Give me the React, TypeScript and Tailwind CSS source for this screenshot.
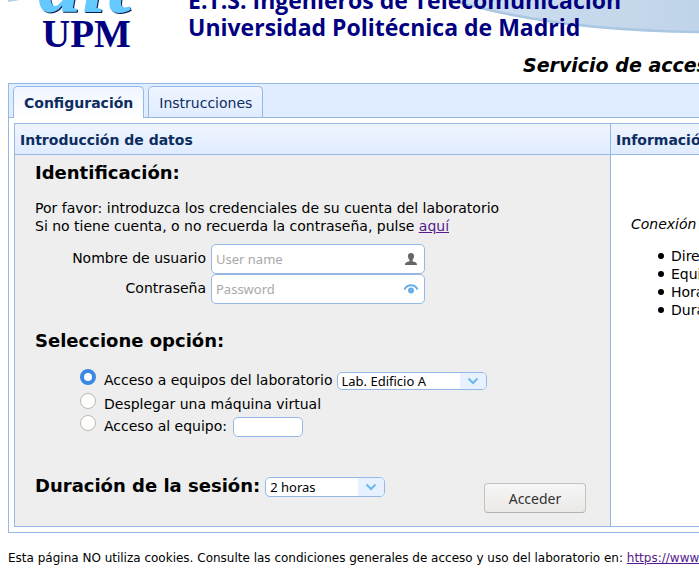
import { useState, type ReactNode } from "react";

const SANS = "font-['DejaVu_Sans','Verdana',sans-serif]";

function Chevron() {
  return (
    <svg viewBox="0 0 12 8" className="h-2 w-3" fill="none" stroke="#6cb8f0" strokeWidth="2" aria-hidden="true">
      <path d="M1.5 1.5 L6 6 L10.500 1.500" />
    </svg>
  );
}

function Picker({ id, label, className, options }: { id: string; label: string; className: string; options: string[] }) {
  return (
    <span className={`relative inline-flex overflow-hidden rounded-[5px] border border-[#95b8e7] bg-white ${className}`}>
      <select
        id={id}
        aria-label={label}
        className="h-full w-full appearance-none bg-transparent pl-1 pr-7 font-['Noto_Sans',sans-serif] text-[13px] leading-none outline-none"
      >
        {options.map((option) => (
          <option key={option}>{option}</option>
        ))}
      </select>
      <span className="pointer-events-none absolute inset-y-0 right-0 flex w-[26px] items-center justify-center bg-[#e8f1ff]">
        <Chevron />
      </span>
    </span>
  );
}

function Credential({ id, label, type, placeholder, icon }: { id: string; label: string; type: string; placeholder: string; icon: ReactNode }) {
  return (
    <div className="flex h-[30px] items-start">
      <label htmlFor={id} className="w-[171px] pt-[5px] text-right leading-[18px]">
        {label}
      </label>
      <span className="ml-[5px] flex h-[30px] w-[214px] items-center rounded-[5px] border border-[#95b8e7] bg-white pr-[5px] pl-1">
        <input
          id={id}
          type={type}
          placeholder={placeholder}
          className="h-full min-w-0 flex-1 bg-transparent font-['Noto_Sans',sans-serif] text-[13px] outline-none placeholder:text-[#a9a9a9]"
        />
        {icon}
      </span>
    </div>
  );
}

const RADIO =
  "mr-2 size-4 shrink-0 appearance-none rounded-full border border-[#c0b8b0] bg-white checked:border-[4px] checked:border-[#3b87e4]";

const BULLET = "flex items-center before:mr-[7px] before:size-[6px] before:shrink-0 before:rounded-full before:bg-black before:content-['']";

export default function App() {
  const [mode, setMode] = useState("lab");
  return (
    <div className={`overflow-hidden bg-white text-[14px] text-black ${SANS}`}>
      <header className="relative flex h-[83px] justify-between overflow-hidden pl-2">
        <svg viewBox="0 0 699 83" className="absolute top-0 left-0 h-[83px] w-[699px]" aria-hidden="true">
          <defs>
            <linearGradient id="sky" x1="0" x2="1">
              <stop offset="0" stopColor="#cfdff0" />
              <stop offset="1" stopColor="#c0d4e9" />
            </linearGradient>
          </defs>
          <path d="M8 0 H20 L8 2 Z" fill="#b5cfe8" />
          <path d="M448 0 Q550 31 699 32 V0 Z" fill="url(#sky)" />
          <path d="M448 -1 Q550 30.500 699 32" fill="none" stroke="#abc8e3" strokeWidth="2.500" />
        </svg>
        <div className="relative flex">
          <div className="flex h-[53px] w-[168px] flex-col justify-end pl-[34px]">
            <span className="-ml-1 h-[45px] shrink-0 font-['Liberation_Serif',serif] text-[88px] leading-[26px] font-bold text-[#63c9ff] italic [text-shadow:1px_1px_0_#0b1c4d]">
              dit
            </span>
            <span className="h-[38px] shrink-0 font-['Liberation_Serif',serif] text-[39px] leading-[38px] font-bold text-[#000080]">UPM</span>
          </div>
          <div className="flex h-[41px] flex-col justify-end pl-3 font-['Trebuchet_MS','Open_Sans',sans-serif] text-[23px] leading-[27px] font-bold whitespace-nowrap text-[#000080]">
            <span>E.T.S. Ingenieros de Telecomunicación</span>
            <span>Universidad Politécnica de Madrid</span>
          </div>
        </div>
        <h1 className="absolute top-[53px] left-[523px] text-[19px] leading-6 font-bold whitespace-nowrap italic">
          Servicio de acceso remoto
        </h1>
      </header>

      <main className="ml-2 border-y border-l border-[#95b8e7]">
        <nav className="flex h-[34px] items-end gap-1 border-b border-[#95b8e7] bg-[#e0ecff] pl-1 text-[#0e2d5f]">
          <button className="-mb-px h-8 rounded-t-[5px] border border-b-0 border-[#95b8e7] bg-linear-to-b from-[#eff5ff] to-white px-[10px] pt-[2px] font-bold">
            Configuración
          </button>
          <button className="h-[31px] rounded-t-[5px] border border-b-0 border-[#95b8e7] bg-linear-to-b from-[#eff5ff] to-[#e0ecff] px-[10px] pt-[2px]">
            Instrucciones
          </button>
        </nav>

        <div className="py-[5px] pl-[5px]">
          <div className="flex border-y border-l border-[#95b8e7]">
            <section className="w-[595px] shrink-0 bg-[#eee]">
              <h2 className="h-[31px] border-b border-[#95b8e7] bg-linear-to-b from-[#eff5ff] to-[#e0ecff] pl-[5px] leading-[32px] font-bold text-[#0e2d5f]">
                Introducción de datos
              </h2>
              <form className="px-5 pb-[13px]" onSubmit={(e) => e.preventDefault()}>
                <h3 className="pt-[6px] text-[18px] leading-6 font-bold">Identificación:</h3>
                <p className="mt-[14px] leading-[18px]">
                  Por favor: introduzca los credenciales de su cuenta del laboratorio
                  <br />
                  Si no tiene cuenta, o no recuerda la contraseña, pulse{" "}
                  <a href="#cuenta" className="text-[#551a8b] underline">aquí</a>
                </p>
                <div className="mt-[9px]">
                  <Credential
                    id="user"
                    label="Nombre de usuario"
                    type="text"
                    placeholder="User name"
                    icon={
                      <svg viewBox="0 0 16 16" className="size-4" fill="#666" aria-hidden="true">
                        <path d="M8 2C5.800 2 4.800 3.600 5 5.500C5.200 7.400 6 8.400 6.500 9V10.300C4.500 10.800 2 11.300 2 14H14C14 11.300 11.500 10.800 9.500 10.300V9C10 8.400 10.800 7.400 11 5.500C11.200 3.600 10.200 2 8 2Z" />
                      </svg>
                    }
                  />
                  <Credential
                    id="password"
                    label="Contraseña"
                    type="password"
                    placeholder="Password"
                    icon={
                      <svg viewBox="0 0 16 16" className="size-4" aria-hidden="true">
                        <path d="M1.500 8.500C4 2.800 12 2.800 14.500 8.500" fill="none" stroke="#6aaee6" strokeWidth="2" />
                        <circle cx="8" cy="9.500" r="3" fill="#6aaee6" />
                      </svg>
                    }
                  />
                </div>
                <h3 className="mt-[25px] text-[18px] leading-6 font-bold">Seleccione opción:</h3>
                <div className="mt-4 pl-[45px]">
                  <div className="flex h-6 items-start">
                    <input id="lab" type="radio" name="mode" checked={mode === "lab"} onChange={() => setMode("lab")} className={RADIO} />
                    <label htmlFor="lab" className="pt-[2px] leading-[18px]">Acceso a equipos del laboratorio</label>
                    <Picker id="room" label="Laboratorio" className="mt-[3px] ml-1 h-[18px] w-[150px]" options={["Lab. Edificio A", "Lab. Edificio B"]} />
                  </div>
                  <div className="flex h-[22px] items-start">
                    <input id="vm" type="radio" name="mode" checked={mode === "vm"} onChange={() => setMode("vm")} className={RADIO} />
                    <label htmlFor="vm" className="pt-[2px] leading-[18px]">Desplegar una máquina virtual</label>
                  </div>
                  <div className="flex h-[22px] items-start">
                    <input id="host" type="radio" name="mode" checked={mode === "host"} onChange={() => setMode("host")} className={RADIO} />
                    <label htmlFor="host" className="pt-[2px] leading-[18px]">Acceso al equipo:</label>
                    <input aria-label="Equipo" className="mt-[2px] ml-[6px] h-5 w-[70px] rounded-[5px] border border-[#95b8e7] bg-white px-1 text-[13px] outline-none" />
                  </div>
                </div>
                <div className="mt-[37px] flex items-start">
                  <label htmlFor="duration" className="text-[18px] leading-6 font-bold">Duración de la sesión:</label>
                  <Picker id="duration" label="Duración" className="mt-[3px] ml-[5px] h-5 w-[120px]" options={["2 horas", "1 hora"]} />
                  <button className="mt-[9px] mr-1 ml-auto h-[30px] w-[102px] rounded-[4px] border border-[#c6c2bf] border-b-[#b6b1ad] bg-linear-to-b from-[#f7f6f6] to-[#eae9e8] font-['Noto_Sans',sans-serif] text-[14px] text-[#333]">
                    Acceder
                  </button>
                </div>
              </form>
            </section>

            <section className="min-w-0 flex-1 overflow-hidden border-l border-[#95b8e7] whitespace-nowrap">
              <h2 className="h-[31px] border-b border-[#95b8e7] bg-linear-to-b from-[#eff5ff] to-[#e0ecff] pl-[5px] leading-[32px] font-bold text-[#0e2d5f]">
                Información
              </h2>
              <p className="mt-[60px] pl-5 leading-[18px] italic">Conexión actual</p>
              <ul className="mt-[14px] pl-[47px] leading-[18px]">
                <li className={BULLET}>Dirección</li>
                <li className={BULLET}>Equipo</li>
                <li className={BULLET}>Hora</li>
                <li className={BULLET}>Duración</li>
              </ul>
            </section>
          </div>
        </div>
      </main>

      <footer className="mt-4 pl-2 text-[12px] leading-[18px] whitespace-nowrap">
        Esta página NO utiliza cookies. Consulte las condiciones generales de acceso y uso del laboratorio en:{" "}
        <a href="#condiciones" className="text-[#551a8b] underline">https://www.upm.es</a>
      </footer>
    </div>
  );
}
